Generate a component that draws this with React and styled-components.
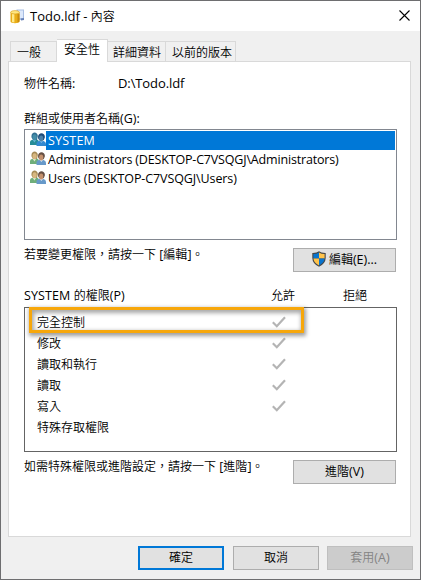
import React from "react";
import styled, { createGlobalStyle, css } from "styled-components";

const GlobalStyle = createGlobalStyle`
  * { box-sizing: border-box; }
  body {
    margin: 0;
    overflow: hidden;
    background: #fff;
    color: #000;
    font: 350 12px/16px "Noto Sans CJK TC", sans-serif;
  }
`;

const Window = styled.main`
  width: 421px;
  height: 580px;
  border: 1px solid #6e6e70;
  background: #f0f0f0;
  display: flex;
  flex-direction: column;
  white-space: nowrap;
`;

const Latin = styled.span`
  font-family: "Open Sans", "Noto Sans", sans-serif;
  font-weight: 380;
  font-size: ${(p) => p.$size || 12.5}px;
  letter-spacing: ${(p) => p.$track || 0}px;
`;

const TitleBar = styled.header`
  height: 30px;
  flex: none;
  background: #fff;
  display: flex;
  align-items: center;
  padding: 0 9px 0 9px;
`;

const Title = styled.h1`
  margin: -1px auto 0 5px;
  font: inherit;
`;

const CloseButton = styled.button`
  border: 0;
  padding: 0;
  background: none;
  height: 11px;
  width: 11px;
  display: block;
  margin: 0 1px 2px 0;
  svg { display: block; }
`;

const TabList = styled.nav`
  height: 31px;
  flex: none;
  padding: 8px 0 0 9px;
  display: flex;
  align-items: flex-end;
`;

const Tab = styled.button`
  font: inherit;
  color: #000;
  width: ${(p) => p.$width}px;
  height: 21px;
  padding: 0 0 1px ${(p) => p.$pad}px;
  text-align: left;
  background: #f0f0f0;
  border: 1px solid #d9d9d9;
  border-width: 1px 1px 0 0;
  &:first-child { border-left-width: 1px; }
  ${(p) =>
    p.$active &&
    css`
      height: 23px;
      background: #fff;
      padding-bottom: 4px;
      z-index: 1;
    `}
`;

const Panel = styled.section`
  width: 403px;
  height: 476px;
  margin: -1px 0 0 7px;
  border: 1px solid #d9d9d9;
  background: #fff;
  padding: 13px 13px 0 15px;
  flex: none;
`;

const ObjectRow = styled.div`
  display: grid;
  grid-template-columns: 94px 1fr;
  height: 18px;
  margin: 0 0 17px;
`;

const Label = styled.div`
  height: 18px;
`;

const UserList = styled.ul`
  list-style: none;
  margin: 1px 0 8px;
  padding: 1px;
  height: 111px;
  border: 1px solid #828790;
`;

const UserItem = styled.li`
  height: 19px;
  display: flex;
  padding-left: 4px;
  align-items: flex-start;
  svg { flex: none; margin-top: 1px; }
`;

const UserName = styled.div`
  flex: 1;
  height: 19px;
  line-height: 18px;
  padding-left: 2px;
  ${(p) => p.$selected && css`background: #0078d7; color: #fff;`}
`;

const ActionRow = styled.div`
  display: flex;
  justify-content: space-between;
  height: 24px;
  padding-right: 1px;
`;

const Hint = styled.span`
  margin-top: -2px;
`;

const PushButton = styled.button`
  font: inherit;
  color: ${(p) => (p.disabled ? "#838383" : "#000")};
  width: ${(p) => p.$width}px;
  height: 24px;
  padding: 0 0 2px;
  display: flex;
  align-items: center;
  justify-content: center;
  gap: 3px;
  background: ${(p) => (p.disabled ? "#cccccc" : "#e1e1e1")};
  border: ${(p) => (p.$primary ? "2px solid #0078d7" : `1px solid ${p.disabled ? "#bfbfbf" : "#adadad"}`)};
`;

const PermissionHeader = styled.div`
  display: grid;
  grid-template-columns: 247px 72px 1fr;
  margin: 15px 0 4px;
  height: 16px;
`;

const PermissionList = styled.div`
  height: 145px;
  border: 1px solid #646464;
  margin-bottom: 8px;
  padding: 3px 0 0 12px;
  position: relative;
`;

const Permission = styled.div`
  height: 21px;
  display: grid;
  grid-template-columns: 235px 20px;
  align-items: center;
`;

const Highlight = styled.div`
  position: absolute;
  left: 4px;
  top: -1px;
  width: 275px;
  height: 26px;
  border: 3px solid #f7a70b;
  box-shadow: 1px 2px 4px 1px rgba(0, 0, 0, 0.38), inset 1px 2px 4px 1px rgba(0, 0, 0, 0.35);
`;

const Footer = styled.footer`
  display: flex;
  padding: 9px 0 0 137px;
  gap: 8px;
  > :first-child { margin-right: 1px; }
`;

const DatabaseIcon = () => (
  <svg width="15" height="15" viewBox="0 0 15 15">
    <path d="M6.5 .5H14v10.5H6.5z" fill="#a8bee3" />
    <path d="M8 1.5h5v7.5H8z" fill="#dce8fb" />
    <path d="M11 9.5l3-.4v1.9l-3 .4z" fill="#647fb6" />
    <path d="M.5 3.3v9.2c0 2.3 9 2.3 9 0V3.3z" fill="#e9ae17" />
    <path d="M2 4.5h2.4v9L2 13z" fill="#ffe98a" />
    <path d="M7.5 4.5h2v8l-2 .9z" fill="#c98a0b" />
    <ellipse cx="5" cy="3.3" rx="4.4" ry="1.7" fill="#ffe781" stroke="#d99d19" strokeWidth=".6" />
  </svg>
);

const UsersIcon = ({ selected }) => (
  <svg width="16" height="15" viewBox="0 0 16 15">
    <path d="M0 13V9.5Q.7 8 3 7.8L7 7.6q2 .5 2 3.4v2z" fill={selected ? "#268d96" : "#6fae7a"} />
    <path d="M2.7 8l1.8 2.5L6 8z" fill={selected ? "#65b5d5" : "#dce8cf"} />
    <path d="M1.6 5.5C.4-.8 7.7-1.1 7.8 4L7 8H3z" fill={selected ? "#316f91" : "#a58a55"} />
    <ellipse cx="4.6" cy="5.2" rx="2.1" ry="3" fill={selected ? "#438da8" : "#d7b780"} />
    <path d="M6.5 14v-3Q7 9.2 9.5 9l4-.1q2.2.6 2.5 2.6V14z" fill={selected ? "#3489d0" : "#6799c9"} />
    <path d="M9.7 9l1.7 2 1.6-2z" fill={selected ? "#80c0ef" : "#d9e8f4"} />
    <path d="M8.2 6.2C6.8-.1 15.6-.5 14.8 5.5l-1.1 2.8H9.2z" fill={selected ? "#1d4a78" : "#665044"} />
    <ellipse cx="11.2" cy="6.5" rx="2.1" ry="2.9" fill={selected ? "#4c81a8" : "#c4916e"} />
  </svg>
);

const ShieldIcon = () => (
  <svg width="14" height="16" viewBox="0 0 14 16">
    <path d="M7 .3Q4.8 2.1.3 2V7Q.5 12.8 7 15.8 13.5 12.8 13.7 7V2Q9.2 2.1 7 .3z" fill="#474747" />
    <path d="M7 1.5Q4.8 3 1.4 3.1v4.5H7z" fill="#0874ce" />
    <path d="M7 1.5q2.2 1.5 5.6 1.6v4.5H7zM1.4 7.6Q2 11.9 7 14.6v-7z" fill="#ffc34b" />
    <path d="M7 7.6h5.6Q12 11.9 7 14.6z" fill="#0874ce" />
  </svg>
);

const CheckIcon = () => (
  <svg width="14" height="12" viewBox="0 0 14 12">
    <path d="M.8 6.2l4 4L13 1.2" fill="none" stroke="#b4b4b4" strokeWidth="2.2" />
  </svg>
);

const users = [
  { name: "SYSTEM", track: 0.2 },
  { name: "Administrators (DESKTOP-C7VSQGJ\\Administrators)", track: -0.17 },
  { name: "Users (DESKTOP-C7VSQGJ\\Users)", track: -0.1 },
];

const permissions = [
  ["完全控制", true],
  ["修改", true],
  ["讀取和執行", true],
  ["讀取", true],
  ["寫入", true],
  ["特殊存取權限", false],
];

const tabs = [
  ["一般", 47, 6],
  ["安全性", 51, 7],
  ["詳細資料", 58, 5],
  ["以前的版本", 70, 6],
];

export default function App() {
  return (
    <>
      <GlobalStyle />
      <Window>
        <TitleBar>
          <DatabaseIcon />
          <Title><Latin $size={13}>Todo.ldf - </Latin>內容</Title>
          <CloseButton aria-label="關閉">
            <svg width="11" height="11" viewBox="0 0 11 11"><path d="M.5.5l10 10m0-10l-10 10" stroke="#000" strokeWidth="1.1" /></svg>
          </CloseButton>
        </TitleBar>
        <TabList>
          {tabs.map(([name, width, pad], i) => (
            <Tab key={name} $width={width} $pad={pad} $active={i === 1}>{name}</Tab>
          ))}
        </TabList>
        <Panel>
          <ObjectRow>
            <span>物件名稱<Latin>:</Latin></span>
            <Latin $size={13} $track={-0.1}>D:\Todo.ldf</Latin>
          </ObjectRow>
          <Label>群組或使用者名稱<Latin>(G):</Latin></Label>
          <UserList>
            {users.map(({ name, track }, i) => (
              <UserItem key={name}>
                <UsersIcon selected={i === 0} />
                <UserName $selected={i === 0}><Latin $track={track}>{name}</Latin></UserName>
              </UserItem>
            ))}
          </UserList>
          <ActionRow>
            <Hint>若要變更權限，請按一下<Latin> [</Latin>編輯<Latin>]</Latin>。</Hint>
            <PushButton $width={103}><ShieldIcon /><span>編輯<Latin>(E)...</Latin></span></PushButton>
          </ActionRow>
          <PermissionHeader>
            <span><Latin $track={0.1}>SYSTEM </Latin>的權限<Latin>(P)</Latin></span>
            <span>允許</span>
            <span>拒絕</span>
          </PermissionHeader>
          <PermissionList>
            <Highlight />
            {permissions.map(([name, allowed]) => (
              <Permission key={name}>
                <span>{name}</span>
                {allowed && <CheckIcon />}
              </Permission>
            ))}
          </PermissionList>
          <ActionRow>
            <Hint>如需特殊權限或進階設定，請按一下<Latin> [</Latin>進階<Latin>]</Latin>。</Hint>
            <PushButton $width={103}><span>進階<Latin>(V)</Latin></span></PushButton>
          </ActionRow>
        </Panel>
        <Footer>
          <PushButton $width={86} $primary>確定</PushButton>
          <PushButton $width={86}>取消</PushButton>
          <PushButton $width={86} disabled><span>套用<Latin>(A)</Latin></span></PushButton>
        </Footer>
      </Window>
    </>
  );
}
